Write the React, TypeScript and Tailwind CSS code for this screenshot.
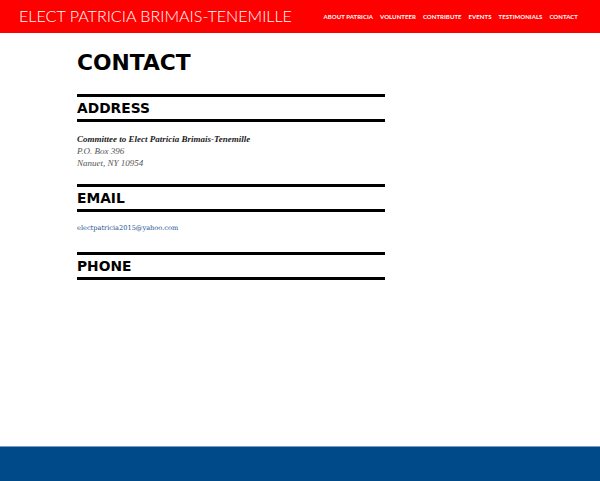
const navItems = [
  "About Patricia",
  "Volunteer",
  "Contribute",
  "Events",
  "Testimonials",
  "Contact",
];

function SectionHeading({ title }: { title: string }) {
  return (
    <div className="border-y-[3px] border-black">
      <h2 className="flex h-[22px] items-center pt-[2px] font-['DejaVu_Sans',sans-serif] text-[13.8px] font-bold uppercase leading-none text-black">
        {title}
      </h2>
    </div>
  );
}

export default function App() {
  return (
    <div className="flex h-screen flex-col bg-white">
      <header className="flex h-[33px] shrink-0 items-center justify-between bg-[#ff0000] pl-[19px] pr-[22px]">
        <span className="font-['Lato',sans-serif] text-[16.1px] font-light uppercase leading-none text-white">
          Elect Patricia Brimais-Tenemille
        </span>
        <nav className="flex items-center gap-[7px]">
          {navItems.map((item) => (
            <a
              key={item}
              href="#"
              className="font-['Lato',sans-serif] text-[6px] font-bold uppercase tracking-[0.01em] text-white"
            >
              {item}
            </a>
          ))}
        </nav>
      </header>

      <main className="flex-1 pl-[77px]">
        <div className="w-[308px]">
          <h1 className="mt-[15px] mb-[16px] font-['DejaVu_Sans',sans-serif] text-[21.8px] font-bold uppercase leading-[30px] text-black">
            Contact
          </h1>

          <SectionHeading title="Address" />
          <div className="mt-[11px] mb-[15px] font-['Liberation_Serif',serif] text-[9px] italic leading-[12px] text-[#555]">
            <p className="font-bold text-[#222]">Committee to Elect Patricia Brimais-Tenemille</p>
            <p>P.O. Box 396</p>
            <p>Nanuet, NY 10954</p>
          </div>

          <SectionHeading title="Email" />
          <div className="mt-[10px] mb-[18px] font-['DejaVu_Serif',serif] text-[6.6px] leading-[12px]">
            <a href="#" className="text-[#1d4f8f]">
              electpatricia2015@yahoo.com
            </a>
          </div>

          <SectionHeading title="Phone" />
        </div>
      </main>

      <footer className="h-[35px] shrink-0 border-t border-[#7c9cbd] bg-[#004a8a]" />
    </div>
  );
}
